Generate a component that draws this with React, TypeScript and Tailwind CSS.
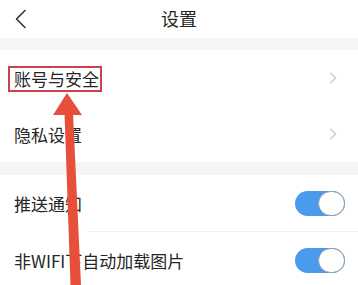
import React from "react";

const font = { fontFamily: '"Noto Sans CJK SC", "Noto Sans", sans-serif' };

function Chevron() {
  return (
    <svg width="10" height="14" viewBox="0 0 10 14" fill="none">
      <path d="M2.5 2 L7.5 7 L2.5 12" stroke="#cccccc" strokeWidth="1.4" strokeLinecap="round" strokeLinejoin="round" />
    </svg>
  );
}

function Toggle() {
  return (
    <div className="relative w-[50px] h-[25px] rounded-full bg-[#4a9bec]">
      <div className="absolute right-0 top-0 w-[27px] h-[25px] rounded-full bg-white border-[1.5px] border-[#8a9aa8]" />
    </div>
  );
}

export default function App() {
  return (
    <div className="relative w-[358px] h-[285px] overflow-hidden bg-white text-[#262626]" style={font}>
      <div className="h-[38px] flex items-center justify-center relative">
        <svg className="absolute left-[14px] top-[9px]" width="14" height="20" viewBox="0 0 14 20" fill="none">
          <path d="M11 1.5 L2.5 10 L11 18.5" stroke="#333" strokeWidth="1.6" strokeLinecap="round" strokeLinejoin="round" />
        </svg>
        <span className="text-[18px] leading-none -mt-[2px]">设置</span>
      </div>
      <div className="h-[12px] bg-[#f5f5f5]" />
      <div className="h-[56px] flex items-center justify-between pl-[14px] pr-[20px]">
        <span className="text-[17px] leading-none">账号与安全</span>
        <Chevron />
      </div>
      <div className="h-[56px] flex items-center justify-between pl-[14px] pr-[20px]">
        <span className="text-[17px] leading-none">隐私设置</span>
        <Chevron />
      </div>
      <div className="h-[13px] bg-[#f5f5f5]" />
      <div className="h-[56px] flex items-center justify-between pl-[14px] pr-[13px]">
        <span className="text-[17px] leading-none">推送通知</span>
        <Toggle />
      </div>
      <div className="h-px bg-[#efefef] ml-[87px]" />
      <div className="h-[56px] flex items-center justify-between pl-[14px] pr-[13px]">
        <span className="text-[17px] leading-none">非WIFI下自动加载图片</span>
        <Toggle />
      </div>

      <div className="absolute left-[8px] top-[66px] w-[94px] h-[26px] border-2 border-[#c8434e]" />
      <svg className="absolute left-0 top-0" width="358" height="285" viewBox="0 0 358 285">
        <polygon points="67,93 82,115 53,115" fill="#e6503b" />
        <polygon points="64.5,113 73,113 81,285 70.5,285" fill="#e6503b" />
      </svg>
    </div>
  );
}
